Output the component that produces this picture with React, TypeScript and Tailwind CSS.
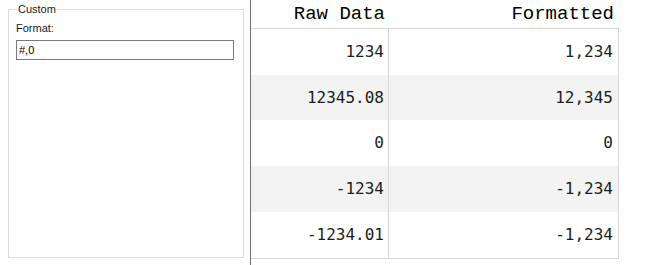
const rows = [
  { raw: '1234', formatted: '1,234' },
  { raw: '12345.08', formatted: '12,345' },
  { raw: '0', formatted: '0' },
  { raw: '-1234', formatted: '-1,234' },
  { raw: '-1234.01', formatted: '-1,234' },
];

const uiFont = "font-['Liberation_Sans',Tahoma,sans-serif]";

const App = () => {
  return (
    <div className="flex h-[265px] w-[648px] bg-white">
      {/* format settings */}
      <div className="w-[250px] shrink-0 pl-2 pr-[6px] pt-[3px]">
        <fieldset className={`h-[255px] border border-[#dcdcdc] px-[7px] ${uiFont}`}>
          <legend className="ml-[1px] px-[1px] text-[11px] leading-[13px] text-[#1a1a1a]">Custom</legend>
          <div className="mt-[6px] text-[11px] leading-[13px] text-[#1a1a1a]">Format:</div>
          <input
            defaultValue="#,0"
            className="mt-[5px] h-[20px] w-[218px] border border-[#7a7a7a] px-[2px] text-[11px] text-black outline-none"
          />
        </fieldset>
      </div>

      {/* raw vs formatted */}
      <div className="h-[265px] border-l border-[#6f6f6f]">
        <div className="grid h-[28px] w-[368px] grid-cols-[138px_230px] items-center font-['Liberation_Mono',monospace] text-[19px] text-black">
          <div className="pr-[4px] text-right">Raw Data</div>
          <div className="pr-[5px] text-right">Formatted</div>
        </div>
        <div className="w-[368px] border-y border-r border-[#d6d6d6] font-['DejaVu_Sans_Mono',monospace] text-[16px] text-[#1c1c1c]">
          {rows.map((r, i) => (
            <div
              key={r.raw}
              className={`grid grid-cols-[138px_229px] ${i === 1 ? 'h-[45px]' : 'h-[46px]'} ${i % 2 === 1 ? 'bg-[#f3f3f3]' : 'bg-white'}`}
            >
              <div className="flex items-center justify-end border-r border-[#d6d6d6] pr-[4px]">{r.raw}</div>
              <div className="flex items-center justify-end pr-[5px]">{r.formatted}</div>
            </div>
          ))}
        </div>
      </div>
    </div>
  );
};

export default App;
